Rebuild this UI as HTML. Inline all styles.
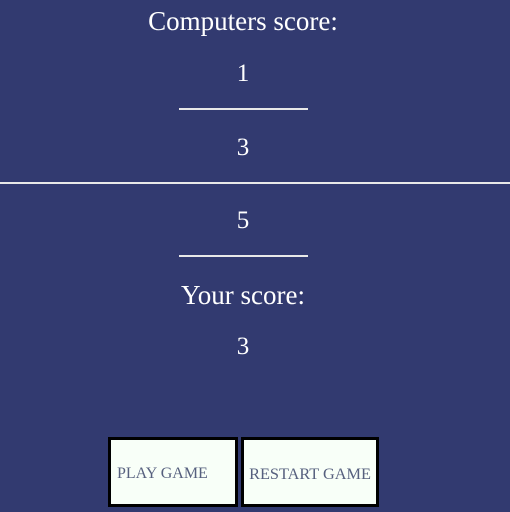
<!DOCTYPE html>
<html><head><style>
html,body{margin:0;padding:0;}
body{width:510px;height:512px;background:#323a70;position:relative;overflow:hidden;font-family:"Liberation Serif",serif;color:#fff;}
.t{position:absolute;left:0;width:486px;text-align:center;}
.hr{position:absolute;height:2px;background:#e8e8e8;}
.btn{position:absolute;top:437px;height:64px;background:#f8fff8;border:3px solid #000;color:#56607e;font-size:16px;line-height:68px;box-sizing:content-box;}
</style></head><body>
<div class="t" style="top:6px;font-size:27px;">Computers score:</div>
<div class="t" style="top:60px;font-size:25px;">1</div>
<div class="hr" style="left:179px;width:129px;top:108px;"></div>
<div class="t" style="top:134px;font-size:25px;">3</div>
<div class="hr" style="left:0;width:510px;top:182px;"></div>
<div class="t" style="top:207px;font-size:25px;">5</div>
<div class="hr" style="left:179px;width:129px;top:255px;"></div>
<div class="t" style="top:280px;font-size:27px;">Your score:</div>
<div class="t" style="top:333px;font-size:25px;">3</div>
<div class="btn" style="left:108px;width:124px;"><span style="padding-left:6px">PLAY GAME</span></div>
<div class="btn" style="left:241px;width:132px;text-align:center;font-size:16.3px;">RESTART GAME</div>
</body></html>
